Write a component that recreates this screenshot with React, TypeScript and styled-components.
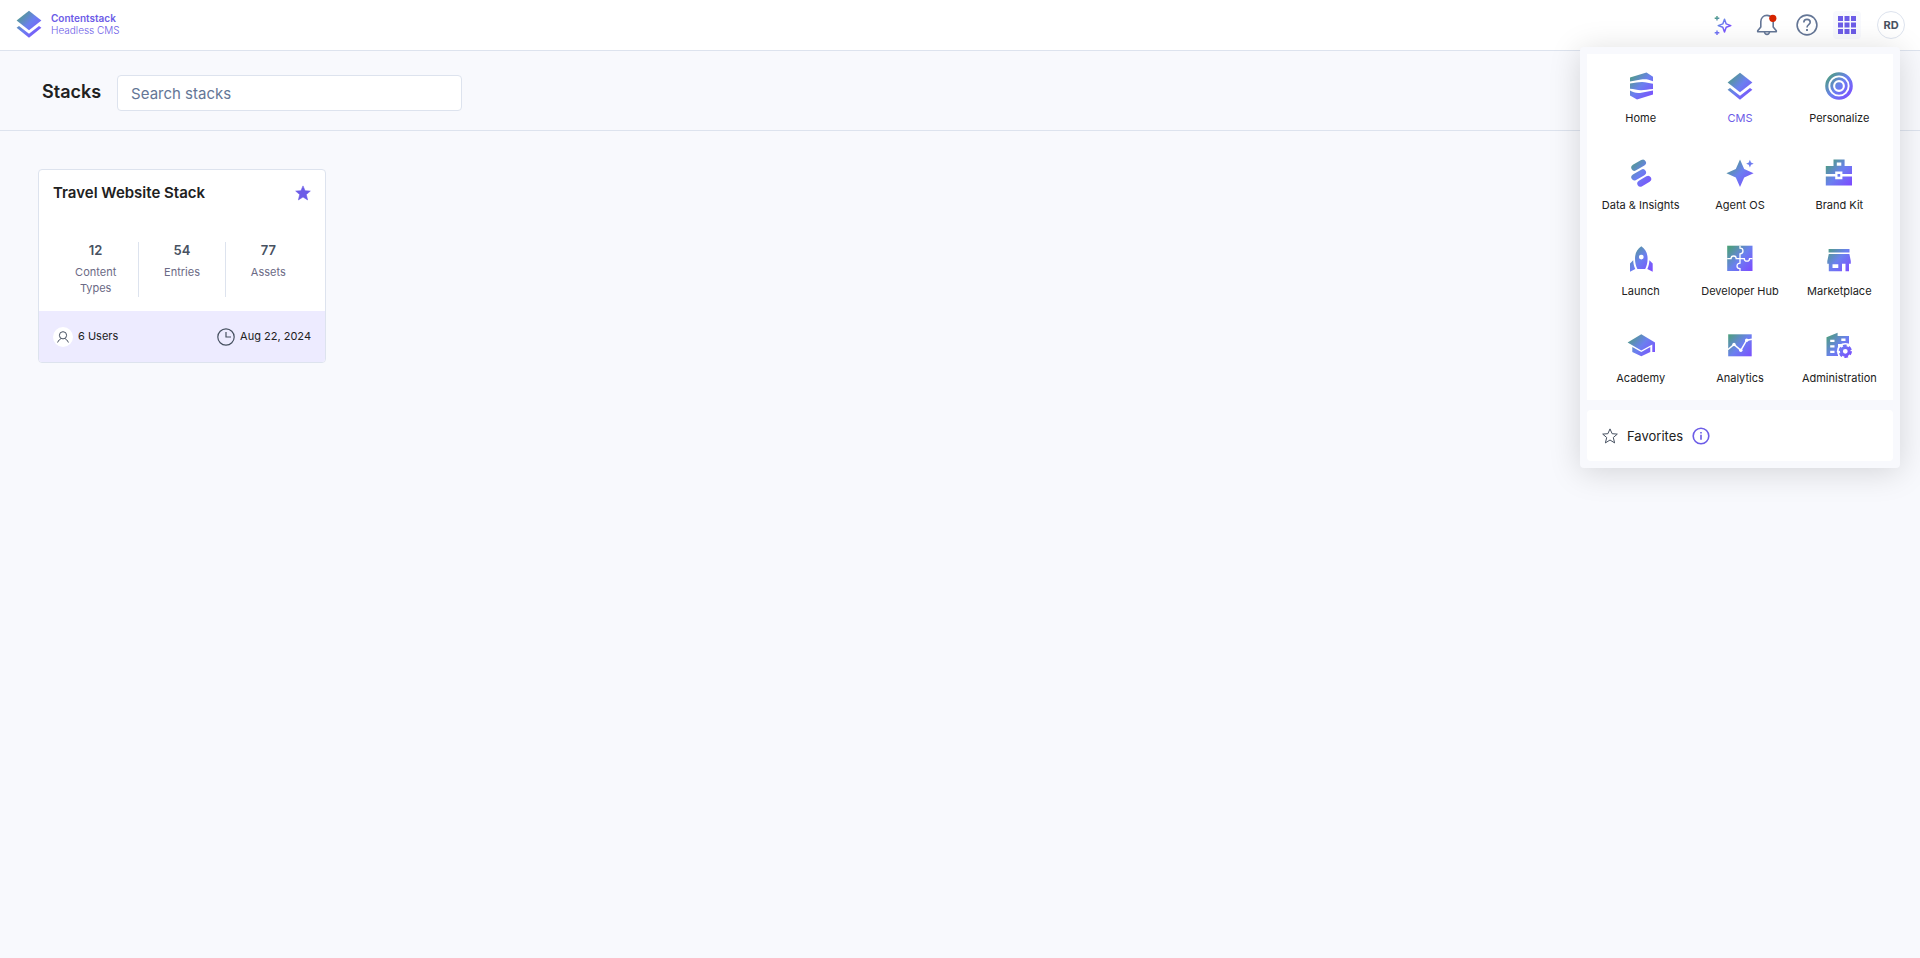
import React, { useId } from "react";
import styled, { createGlobalStyle } from "styled-components";

const color = {
  page: "#f8f9fd",
  surface: "#ffffff",
  line: "#dde3ee",
  ink: "#212121",
  slate: "#475161",
  muted: "#6b6a85",
  steel: "#647696",
  accent: "#6c5ce7",
  lilac: "#edebff",
  alert: "#d62400",
};

const GlobalStyle = createGlobalStyle`
  *, *::before, *::after { box-sizing: border-box; }
  body {
    margin: 0;
    background: ${color.page};
    color: ${color.ink};
    font-family: Inter, "Liberation Sans", sans-serif;
    font-size: 12px;
    line-height: 16px;
  }
  button, input { font-family: inherit; }
  h1, h2, p, dl, dd, ul { margin: 0; padding: 0; }
  svg { display: block; flex: none; }
`;

/* ---------- layout ---------- */

const Page = styled.div`
  min-height: 100vh;
  background: ${color.page};
`;

const TopBar = styled.header`
  position: relative;
  z-index: 2;
  display: flex;
  align-items: center;
  justify-content: space-between;
  height: 51px;
  padding: 0 15px;
  background: ${color.surface};
  border-bottom: 1px solid ${color.line};
`;

const Brand = styled.a`
  display: flex;
  align-items: center;
  gap: 8px;
  padding-bottom: 2px;
  color: ${color.accent};
  text-decoration: none;
`;

const BrandText = styled.span`
  display: flex;
  flex-direction: column;
  font-size: 10px;
  line-height: 12px;
`;

const BrandName = styled.span`
  font-weight: 600;
`;

const BrandProduct = styled.span`
  font-weight: 300;
`;

const Actions = styled.nav`
  display: flex;
  align-items: center;
  gap: 16px;
`;

const ActionGroup = styled.div`
  display: flex;
  align-items: center;
  gap: 12px;
`;

const IconButton = styled.button<{ $active?: boolean }>`
  display: flex;
  align-items: center;
  justify-content: center;
  width: 28px;
  height: 28px;
  padding: 0;
  border: 0;
  border-radius: 4px;
  background: ${(p) => (p.$active ? color.page : "transparent")};
  cursor: pointer;
`;

const Avatar = styled(IconButton)`
  border: 1px solid ${color.line};
  border-radius: 50%;
  color: ${color.slate};
  font-size: 11px;
  font-weight: 700;
`;

const SubHeader = styled.section`
  display: flex;
  align-items: center;
  gap: 16px;
  height: 80px;
  padding: 5px 42px 0;
  border-bottom: 1px solid ${color.line};
`;

const Title = styled.h1`
  padding-bottom: 2px;
  font-size: 18px;
  line-height: 24px;
  font-weight: 600;
`;

const SearchInput = styled.input`
  width: 345px;
  height: 36px;
  padding: 0 13px;
  border: 1px solid ${color.line};
  border-radius: 4px;
  background: ${color.surface};
  color: ${color.ink};
  font-size: 15px;
  &::placeholder { color: ${color.steel}; opacity: 1; }
`;

const Content = styled.main`
  display: flex;
  flex-wrap: wrap;
  gap: 24px;
  padding: 38px;
`;

/* ---------- stack card ---------- */

const Card = styled.article`
  width: 288px;
  overflow: hidden;
  border: 1px solid ${color.line};
  border-radius: 4px;
  background: ${color.surface};
`;

const CardHead = styled.div`
  display: flex;
  align-items: center;
  justify-content: space-between;
  height: 46px;
  padding: 0 14px;
`;

const CardTitle = styled.h2`
  font-size: 15px;
  line-height: 20px;
  font-weight: 600;
`;

const StarButton = styled(IconButton)`
  width: 16px;
  height: 16px;
`;

const Stats = styled.dl`
  display: flex;
  padding: 26px 14px 14px;
`;

const Stat = styled.div`
  display: flex;
  flex: 1;
  flex-direction: column-reverse;
  justify-content: flex-end;
  gap: 6px;
  min-height: 55px;
  padding: 0 12px;
  text-align: center;
  & + & { border-left: 1px solid ${color.line}; }
`;

const StatLabel = styled.dt`
  color: ${color.muted};
  font-size: 11px;
  line-height: 16px;
`;

const StatValue = styled.dd`
  color: ${color.slate};
  font-size: 13px;
  line-height: 16px;
  font-weight: 600;
`;

const CardFoot = styled.div`
  display: flex;
  align-items: center;
  justify-content: space-between;
  height: 51px;
  padding: 0 14px;
  background: ${color.lilac};
`;

const Meta = styled.span`
  display: flex;
  align-items: center;
  gap: 5px;
  font-size: 11px;
`;

const MetaText = styled.span`
  padding-bottom: 2px;
`;

const UserBadge = styled.span`
  display: flex;
  align-items: center;
  justify-content: center;
  width: 20px;
  height: 20px;
  border-radius: 50%;
  background: ${color.surface};
`;

/* ---------- app switcher ---------- */

const Switcher = styled.div`
  position: absolute;
  top: 47px;
  right: 20px;
  display: flex;
  flex-direction: column;
  gap: 10px;
  width: 320px;
  padding: 7px;
  border-radius: 4px;
  background: ${color.page};
  box-shadow: 0 4px 32px rgba(0, 0, 0, 0.15);
`;

const AppGrid = styled.ul`
  display: grid;
  grid-template-columns: repeat(3, 1fr);
  grid-template-rows: repeat(4, 1fr);
  height: 346px;
  padding: 0 4px;
  background: ${color.surface};
  list-style: none;
`;

const AppLink = styled.a<{ $current?: boolean }>`
  display: flex;
  flex-direction: column;
  align-items: center;
  gap: 10px;
  padding-top: 18px;
  color: ${(p) => (p.$current ? color.accent : color.ink)};
  font-size: 11px;
  line-height: 16px;
  white-space: nowrap;
  text-decoration: none;
`;

const Favorites = styled.div`
  display: flex;
  align-items: center;
  gap: 9px;
  height: 51px;
  padding: 0 15px;
  border-radius: 4px;
  background: ${color.surface};
  font-size: 13px;
`;

const InfoButton = styled(IconButton)`
  width: 18px;
  height: 18px;
`;

/* ---------- icons ---------- */

type Paint = { fill: string };

function GradientIcon({ children }: { children: (p: Paint) => React.ReactNode }) {
  const id = useId();
  return (
    <svg width="28" height="28" viewBox="0 0 28 28" aria-hidden="true">
      <defs>
        <linearGradient id={id} gradientUnits="userSpaceOnUse" x1="2" y1="3" x2="26" y2="25">
          <stop offset="0" stopColor="#4c9f7c" />
          <stop offset="0.5" stopColor="#6b80ef" />
          <stop offset="1" stopColor="#7c4dff" />
        </linearGradient>
      </defs>
      {children({ fill: `url(#${id})` })}
    </svg>
  );
}

const CmsIcon = () => (
  <GradientIcon>
    {({ fill }) => (
      <g fill={fill}>
        <path d="M14 .7 26.4 10.5 14 20.3 1.6 10.5Z" />
        <path d="M1.6 17.8 4 15.9 14 23.8 24 15.9 26.4 17.8 14 27.7Z" />
      </g>
    )}
  </GradientIcon>
);

const HomeIcon = () => (
  <GradientIcon>
    {({ fill }) => (
      <path
        fill={fill}
        d="M3 5.4 19.5.6 26 4.8V9.2C22 7.2 18 6.800 14 7.400L3 9.400ZM3 11.600C8 10.800 11 9.900 15 9.900 19 9.900 22 11 26 11.800V17C21 17.200 18 18.300 14 18.300 10 18.300 7 17 3 16.800ZM3 18.600C6 20.500 9 21.400 13 21L26 18.400V22.600L10 27.600 3 23.600Z"
      />
    )}
  </GradientIcon>
);

const PersonalizeIcon = () => (
  <GradientIcon>
    {({ fill }) => (
      <g>
        <circle cx="14" cy="14" r="12.200" fill="none" stroke={fill} strokeWidth="3.200" />
        <circle cx="14" cy="14" r="7.300" fill="none" stroke={fill} strokeWidth="2.800" />
        <circle cx="14" cy="14" r="3.800" fill={fill} />
      </g>
    )}
  </GradientIcon>
);

const InsightsIcon = () => (
  <GradientIcon>
    {({ fill }) => (
      <path
        d="M7.500 8.600 15.800 3.800M7.500 18.200 15.800 13.400M13.500 24.500 21 20"
        fill="none"
        stroke={fill}
        strokeWidth="6.400"
        strokeLinecap="round"
      />
    )}
  </GradientIcon>
);

const AgentIcon = () => (
  <GradientIcon>
    {({ fill }) => (
      <g fill={fill}>
        <path d="M14 .6 18.200 10.100 27.600 14.300 18.200 18.500 14 28 9.800 18.500.4 14.300 9.800 10.100Z" />
        <path d="M23.900.8 25 3.600 27.700 4.700 25 5.800 23.900 8.600 22.800 5.800 20.100 4.700 22.800 3.600Z" />
      </g>
    )}
  </GradientIcon>
);

const BrandKitIcon = () => (
  <GradientIcon>
    {({ fill }) => (
      <g fill={fill} fillRule="evenodd">
        <path d="M8.500.4H19.600V7H27V15H17.400V12.600H10.200V15H.8V7H8.500ZM11.800 3.600V6.800H16.300V3.600Z" />
        <path d="M.8 17.600H10.200V20.200H17.400V17.600H27V26.600H.8Z" />
        <path d="M12.500 15H15.200V17.700H12.500Z" />
      </g>
    )}
  </GradientIcon>
);

const LaunchIcon = () => (
  <GradientIcon>
    {({ fill }) => (
      <g fill={fill} fillRule="evenodd">
        <path d="M14.300 1.300C18.500 4 20.600 8.500 20.600 13.500 20.600 17.500 19.700 21 18.200 24H10.400C8.900 21 8 17.500 8 13.500 8 8.500 10.100 4 14.300 1.300ZM14.300 9.700A2.400 2.400 0 1 0 14.300 14.500 2.400 2.400 0 1 0 14.300 9.700Z" />
        <path d="M6.200 15.300C6.300 18.500 7 21.500 8.300 24L3 26.800V18.600ZM22.400 15.300C22.300 18.500 21.600 21.500 20.300 24L25.700 26.800V18.600Z" />
      </g>
    )}
  </GradientIcon>
);

const DeveloperIcon = () => (
  <GradientIcon>
    {({ fill }) => (
      <g>
        <path fill={fill} d="M1.200.7H26.500V26H1.200Z" />
        <path
          d="M14 .7V3.200C15.200 3.200 17 4 17 6S15.200 8.800 14 8.800V18.200C12.800 18.200 11 19 11 21S12.800 23.600 14 23.600V26M1.200 13.700H5C5 12.200 5.800 11 7.700 11S10.200 12.200 10.200 13.700H18.300C18.300 15 19.200 16.200 21 16.200S23.500 15 23.500 13.700H26.500"
          fill="none"
          stroke="#fff"
          strokeWidth="1.300"
        />
      </g>
    )}
  </GradientIcon>
);

const MarketplaceIcon = () => (
  <GradientIcon>
    {({ fill }) => (
      <g fill={fill} fillRule="evenodd">
        <path d="M3.600 4H24.500V7.500H3.600Z" />
        <path d="M3.800 9H24.400L25.800 16V18.800H24V26.300H20.500V18.800H17V26.300H3.800V18.800H2.300V16ZM7.500 19.200V23H13.300V19.200Z" />
      </g>
    )}
  </GradientIcon>
);

const AcademyIcon = () => (
  <GradientIcon>
    {({ fill }) => (
      <g fill={fill}>
        <path d="M.6 10.600 14.300 2.300 28 10.400V20H25.300V12.400L14.300 18.600Z" />
        <path d="M5.300 15 14.300 20 23.300 15V20L14.300 24.300 5.300 20Z" />
      </g>
    )}
  </GradientIcon>
);

const AnalyticsIcon = () => (
  <GradientIcon>
    {({ fill }) => (
      <g>
        <path fill={fill} d="M2.200 2.300H25.700V24.300H2.200Z" />
        <path d="M2 17.500 8 12.500 14.800 18.300 20.700 8.200 26 7.200" fill="none" stroke="#fff" strokeWidth="1.500" />
        <g fill="#fff">
          <circle cx="8" cy="12.500" r="1.700" />
          <circle cx="14.800" cy="18.300" r="1.700" />
          <circle cx="20.700" cy="8.200" r="1.700" />
        </g>
      </g>
    )}
  </GradientIcon>
);

const AdministrationIcon = () => (
  <GradientIcon>
    {({ fill }) => (
      <g>
        <path
          fill={fill}
          fillRule="evenodd"
          d="M1.500 5.300 12.600.7V4H24V12H13V24H1.500ZM5.200 7.700V10H9.500V7.700ZM5.200 13.300V15.600H9.500V13.300ZM5.200 18.800V21.100H9.500V18.800ZM16.300 6.600V9H20.500V6.600Z"
        />
        <circle cx="20.300" cy="19.300" r="8.400" fill="#fff" />
        <g fill="none" stroke={fill}>
          <circle cx="20.300" cy="19.300" r="3.900" strokeWidth="3" />
          <circle cx="20.300" cy="19.300" r="5.600" strokeWidth="2.200" strokeDasharray="3.600 2.264" />
        </g>
      </g>
    )}
  </GradientIcon>
);

const SparklesIcon = () => {
  const id = useId();
  return (
    <svg width="20" height="22" viewBox="0 0 20 22" fill="none" aria-hidden="true">
      <defs>
        <linearGradient id={id} gradientUnits="userSpaceOnUse" x1="2" y1="3" x2="16" y2="15">
          <stop offset="0" stopColor="#4c9f7c" />
          <stop offset="0.5" stopColor="#6b80ef" />
          <stop offset="1" stopColor="#7c4dff" />
        </linearGradient>
      </defs>
      <g stroke={`url(#${id})`} strokeLinejoin="round">
        <path d="M11.500 5.300 13.200 9.900 17.800 11.600 13.200 13.300 11.500 17.900 9.800 13.300 5.200 11.600 9.800 9.900Z" strokeWidth="1.500" />
        <path d="M4 2V6.600M1.700 4.300H6.300M4 16.400V21M1.700 18.700H6.300" strokeWidth="1.400" />
      </g>
    </svg>
  );
};

const BellIcon = () => (
  <svg width="22" height="22" viewBox="0 0 22 22" aria-hidden="true">
    <g fill="none" stroke={color.steel} strokeWidth="1.600" strokeLinejoin="round">
      <path d="M11 1.400C7.300 1.400 4.800 4.200 4.800 7.800V13L1.700 16.800V17.800H20.300V16.800L17.200 13V7.800C17.200 4.200 14.700 1.400 11 1.400Z" />
      <path d="M8.500 18C8.700 19.500 9.700 20.400 11 20.400S13.300 19.500 13.500 18" />
    </g>
    <circle cx="16.800" cy="4.300" r="3.600" fill={color.alert} />
  </svg>
);

const HelpIcon = () => (
  <svg width="22" height="22" viewBox="0 0 22 22" fill="none" stroke={color.steel} aria-hidden="true">
    <circle cx="11" cy="11" r="9.900" strokeWidth="1.600" />
    <path d="M7.800 8.500C7.800 6.500 9.200 5.400 11 5.400S14.200 6.600 14.200 8.300C14.200 10.600 11 10.700 11 13.400" strokeWidth="1.600" />
    <path d="M11 15V17" strokeWidth="1.800" />
  </svg>
);

const GridIcon = () => (
  <svg width="18" height="18" viewBox="0 0 18 18" fill={color.accent} aria-hidden="true">
    {[0, 6.5, 13].map((y) => [0, 6.5, 13].map((x) => <rect key={`${x}-${y}`} x={x} y={y} width="5" height="5" />))}
  </svg>
);

const StarIcon = ({ outline }: { outline?: boolean }) => (
  <svg
    width="16"
    height="16"
    viewBox="0 0 16 16"
    fill={outline ? "none" : color.accent}
    stroke={outline ? color.slate : color.accent}
    strokeWidth={outline ? 1 : 0.6}
    strokeLinejoin="round"
    aria-hidden="true"
  >
    <path d="M8 .9 10.100 5.700 15.300 6.100 11.300 9.500 12.600 14.900 8 12 3.400 14.900 4.700 9.500.7 6.100 5.900 5.700Z" />
  </svg>
);

const UserIcon = () => (
  <svg width="12" height="12" viewBox="0 0 12 12" fill="none" stroke={color.slate} aria-hidden="true">
    <circle cx="6" cy="4.300" r="3.600" />
    <path d="M.6 11.500C1.500 9.300 2.800 8.200 4.200 7.600M11.400 11.500C10.500 9.300 9.200 8.200 7.800 7.600" />
  </svg>
);

const ClockIcon = () => (
  <svg width="18" height="18" viewBox="0 0 18 18" fill="none" stroke={color.slate} aria-hidden="true">
    <circle cx="9" cy="9" r="8.200" strokeWidth="1.200" />
    <path d="M9 4V9H14" strokeWidth="1.200" />
  </svg>
);

const InfoIcon = () => (
  <svg width="18" height="18" viewBox="0 0 18 18" fill="none" stroke={color.accent} aria-hidden="true">
    <circle cx="9" cy="9" r="7.800" strokeWidth="1.600" />
    <path d="M9 7.800V12.800M9 5V6.600" strokeWidth="1.600" />
  </svg>
);

/* ---------- data ---------- */

const apps = [
  { name: "Home", Icon: HomeIcon },
  { name: "CMS", Icon: CmsIcon, current: true },
  { name: "Personalize", Icon: PersonalizeIcon },
  { name: "Data & Insights", Icon: InsightsIcon },
  { name: "Agent OS", Icon: AgentIcon },
  { name: "Brand Kit", Icon: BrandKitIcon },
  { name: "Launch", Icon: LaunchIcon },
  { name: "Developer Hub", Icon: DeveloperIcon },
  { name: "Marketplace", Icon: MarketplaceIcon },
  { name: "Academy", Icon: AcademyIcon },
  { name: "Analytics", Icon: AnalyticsIcon },
  { name: "Administration", Icon: AdministrationIcon },
];

const stats = [
  { value: 12, label: "Content Types" },
  { value: 54, label: "Entries" },
  { value: 77, label: "Assets" },
];

export default function App() {
  return (
    <Page>
      <GlobalStyle />
      <TopBar>
        <Brand href="#">
          <CmsIcon />
          <BrandText>
            <BrandName>Contentstack</BrandName>
            <BrandProduct>Headless CMS</BrandProduct>
          </BrandText>
        </Brand>
        <Actions>
          <IconButton aria-label="Assistant"><SparklesIcon /></IconButton>
          <ActionGroup>
            <IconButton aria-label="Notifications"><BellIcon /></IconButton>
            <IconButton aria-label="Help"><HelpIcon /></IconButton>
            <IconButton $active aria-label="Apps" aria-expanded="true"><GridIcon /></IconButton>
          </ActionGroup>
          <Avatar>RD</Avatar>
        </Actions>
        <Switcher>
          <AppGrid>
            {apps.map(({ name, Icon, current }) => (
              <li key={name}>
                <AppLink href="#" $current={current}>
                  <Icon />
                  {name}
                </AppLink>
              </li>
            ))}
          </AppGrid>
          <Favorites>
            <StarIcon outline />
            Favorites
            <InfoButton aria-label="About favorites"><InfoIcon /></InfoButton>
          </Favorites>
        </Switcher>
      </TopBar>
      <SubHeader>
        <Title>Stacks</Title>
        <SearchInput type="search" placeholder="Search stacks" aria-label="Search stacks" />
      </SubHeader>
      <Content>
        <Card>
          <CardHead>
            <CardTitle>Travel Website Stack</CardTitle>
            <StarButton aria-label="Favorite stack"><StarIcon /></StarButton>
          </CardHead>
          <Stats>
            {stats.map(({ value, label }) => (
              <Stat key={label}>
                <StatLabel>{label}</StatLabel>
                <StatValue>{value}</StatValue>
              </Stat>
            ))}
          </Stats>
          <CardFoot>
            <Meta>
              <UserBadge><UserIcon /></UserBadge>
              <MetaText>6 Users</MetaText>
            </Meta>
            <Meta>
              <ClockIcon />
              <MetaText>Aug 22, 2024</MetaText>
            </Meta>
          </CardFoot>
        </Card>
      </Content>
    </Page>
  );
}
